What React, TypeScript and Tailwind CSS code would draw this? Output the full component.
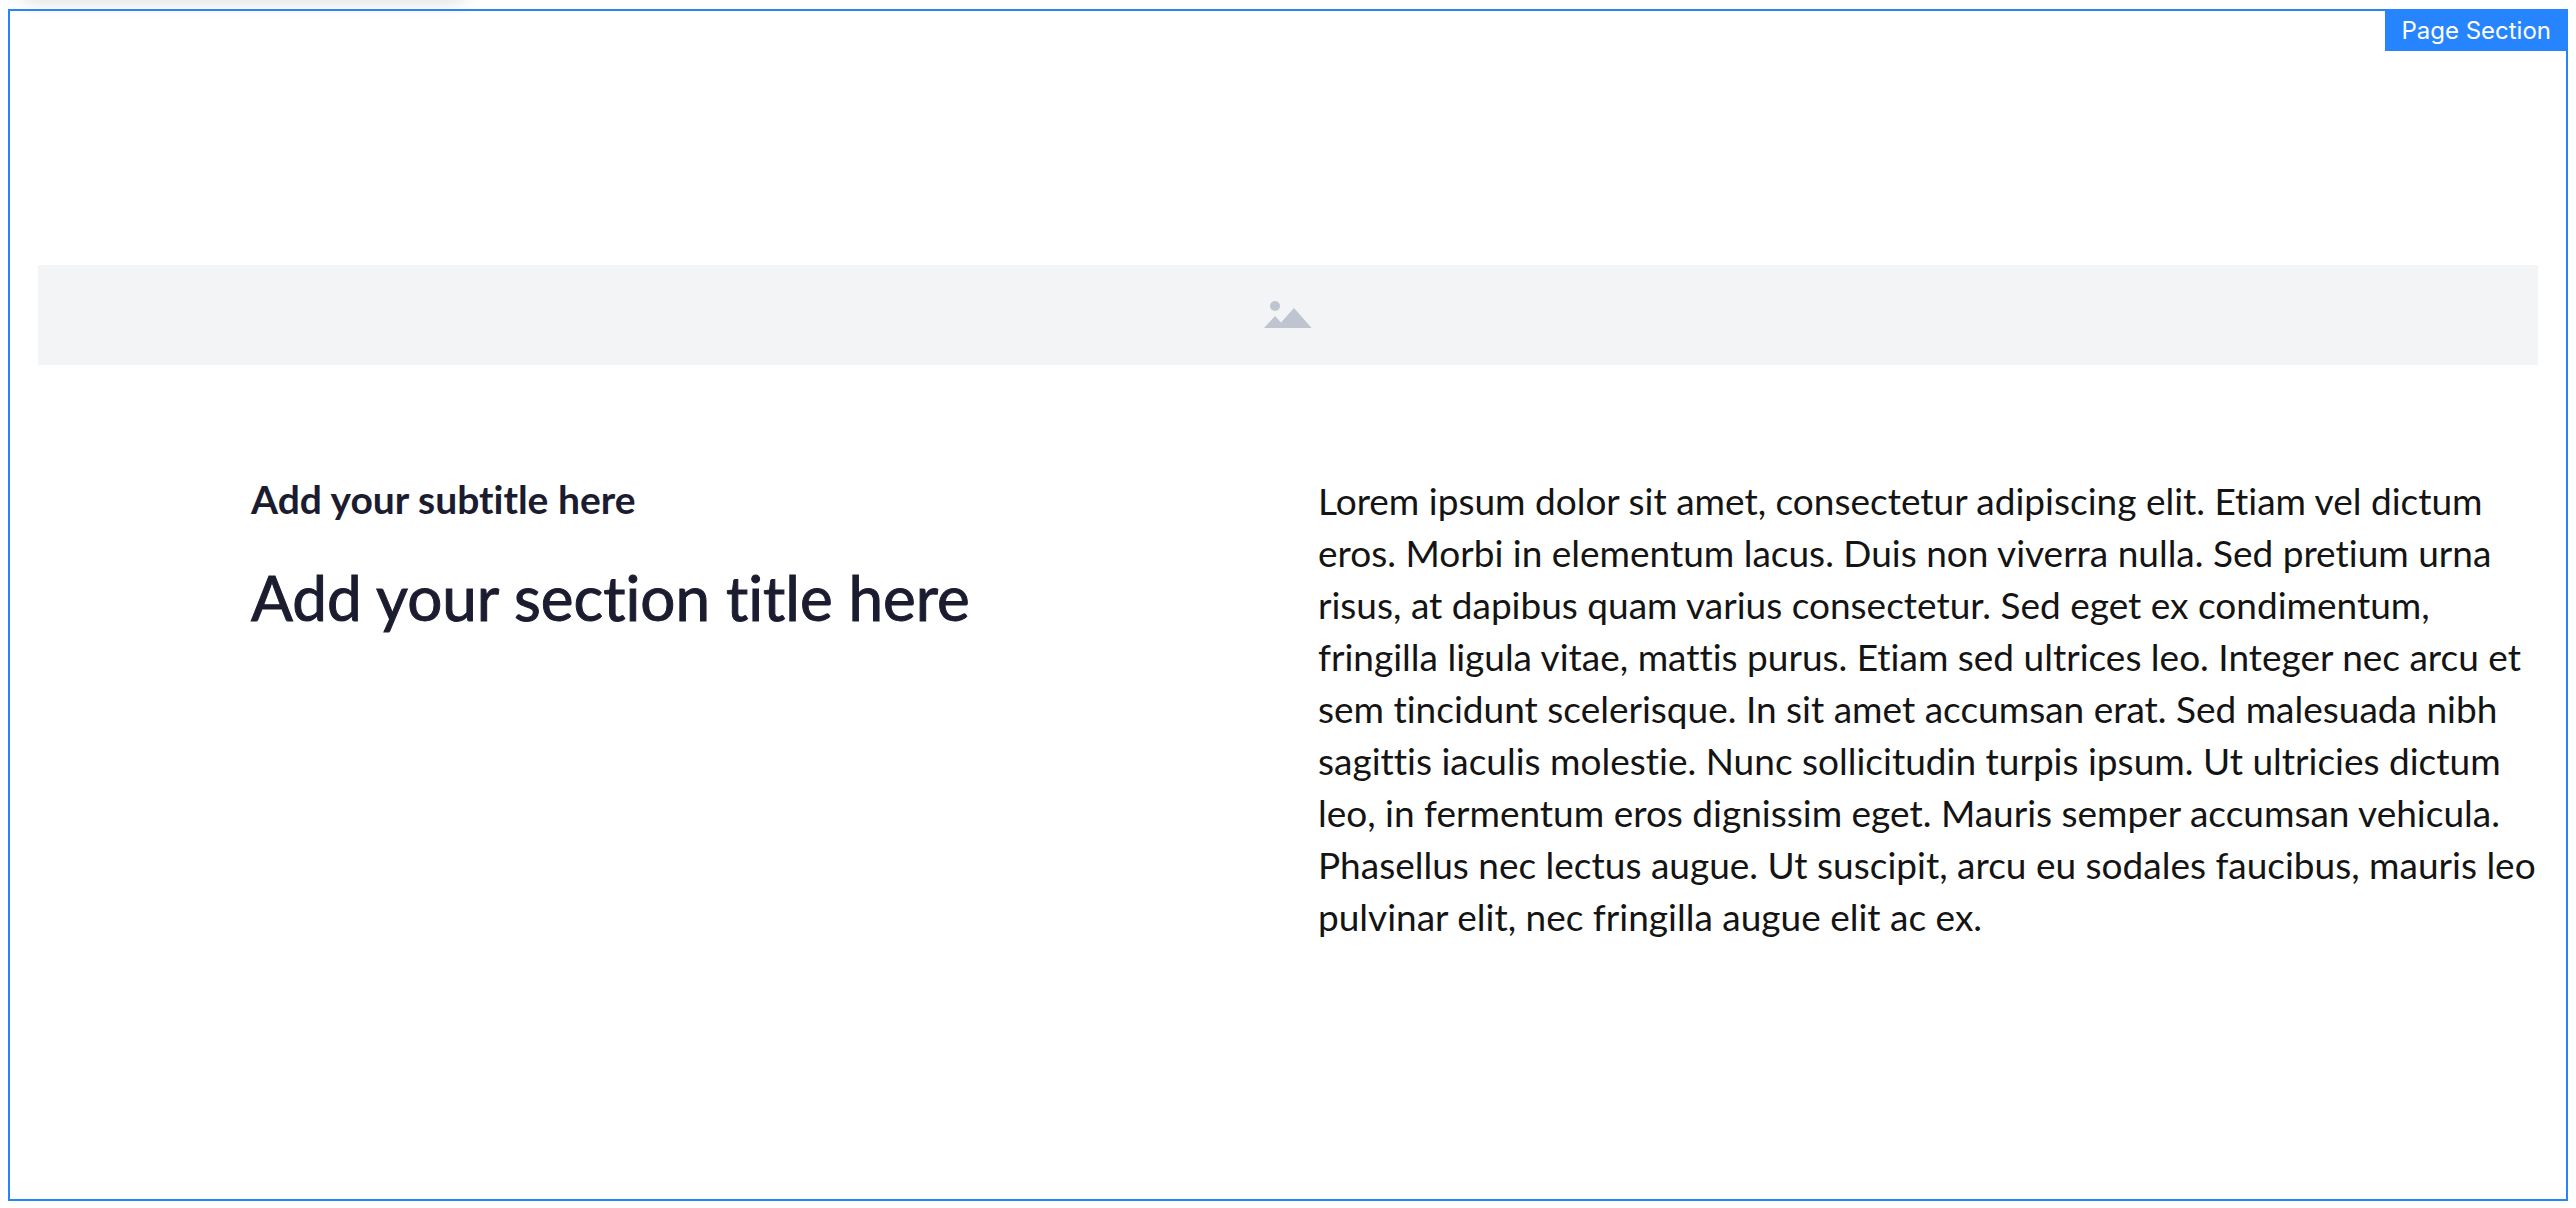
const BODY_TEXT =
  "Lorem ipsum dolor sit amet, consectetur adipiscing elit. Etiam vel dictum eros. Morbi in elementum lacus. Duis non viverra nulla. Sed pretium urna risus, at dapibus quam varius consectetur. Sed eget ex condimentum, fringilla ligula vitae, mattis purus. Etiam sed ultrices leo. Integer nec arcu et sem tincidunt scelerisque. In sit amet accumsan erat. Sed malesuada nibh sagittis iaculis molestie. Nunc sollicitudin turpis ipsum. Ut ultricies dictum leo, in fermentum eros dignissim eget. Mauris semper accumsan vehicula. Phasellus nec lectus augue. Ut suscipit, arcu eu sodales faucibus, mauris leo pulvinar elit, nec fringilla augue elit ac ex.";

function ImagePlaceholder() {
  return (
    <div className="flex h-[100px] items-center justify-center bg-[#f3f4f6]">
      <svg
        className="h-7 w-12"
        viewBox="0 0 48 28"
        fill="#bfc5d0"
        role="img"
        aria-label="Image placeholder"
      >
        <circle cx="11" cy="5" r="5" />
        <path d="M0 27 L11 15 L17 21.5 L30 7 L47.7 27 Z" />
      </svg>
    </div>
  );
}

export default function App() {
  return (
    <div className="flex min-h-screen flex-col overflow-hidden bg-white px-2 pt-[9px] pb-[7px]">
      <div className="absolute -top-10 left-6 h-9 w-[440px] rounded-lg shadow-[0_4px_20px_rgba(0,0,0,0.16)]" />
      <section className="relative flex grow flex-col border-2 border-[#2684ff] px-7 pt-[254px]">
        <span className="absolute -top-0.5 -right-0.5 flex h-[42px] items-center bg-[#2684ff] pt-0.5 pr-[17px] pl-4 font-['Inter',sans-serif] text-[24px] text-white">
          Page Section
        </span>
        <ImagePlaceholder />
        <div className="grid grid-cols-2 gap-[60px] pt-[110px] font-['Lato',sans-serif] [font-variant-ligatures:none]">
          <div className="pl-[213px] text-[#1c1c30]">
            <h3 className="text-[39px] leading-[48px] font-bold">Add your subtitle here</h3>
            <h2 className="pt-[34px] text-[62px] leading-[80px] [-webkit-text-stroke:1px]">
              Add your section title here
            </h2>
          </div>
          <p className="text-[37px] leading-[52px] text-[#141414]">{BODY_TEXT}</p>
        </div>
      </section>
    </div>
  );
}
